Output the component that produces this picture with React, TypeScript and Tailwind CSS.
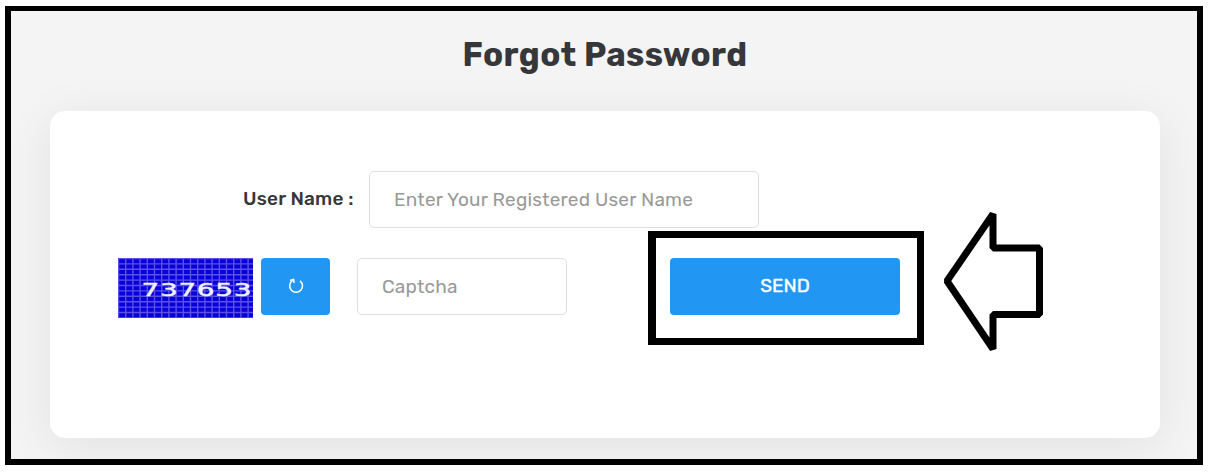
import React from "react";

const CaptchaImage: React.FC = () => {
  const columns = Array.from({ length: 19 }, (_, i) => 0.5 + i * 7.2);
  const rows = Array.from({ length: 12 }, (_, i) => 0.5 + i * 5.4);

  return (
    <svg
      className="mr-2 h-[60px] w-[135px]"
      viewBox="0 0 135 60"
      role="img"
      aria-label="Captcha"
    >
      <rect width="135" height="60" fill="#0800d8" />
      <g stroke="#5a50e8" strokeWidth="1.4">
        {columns.map((x) => (
          <path key={`c${x}`} d={`M${x} 0V60`} />
        ))}
        {rows.map((y) => (
          <path key={`r${y}`} d={`M0 ${y}H135`} />
        ))}
      </g>
      <text
        transform="translate(23.5 38) scale(1.55 1)"
        textLength="71"
        lengthAdjust="spacing"
        fill="#f0f0ff"
        stroke="#f0f0ff"
        strokeWidth="0.5"
        fontSize="18"
        fontFamily="DejaVu Sans, sans-serif"
      >
        737653
      </text>
    </svg>
  );
};

const RefreshIcon: React.FC = () => (
  <svg
    className="mb-0.5 h-5 w-5"
    viewBox="0 0 20 20"
    fill="none"
    stroke="currentColor"
    strokeWidth="1.5"
  >
    <path d="M14 4.8A6.4 6.4 0 1 1 6.8 4.4" />
    <path d="M4 4.4L7.6 3.4L8.1 7" />
  </svg>
);

const Arrow: React.FC = () => (
  <svg
    className="absolute top-[200px] left-[930px] h-[160px] w-[120px]"
    viewBox="930 200 120 160"
    fill="none"
    stroke="black"
    strokeWidth="7"
    strokeLinejoin="bevel"
  >
    <path d="M993 214V248H1039.5V314.5H993V349L947 281Z" />
  </svg>
);

export default function App() {
  return (
    <div className="relative h-[472px] w-[1215px] overflow-hidden bg-white pt-1.5 pl-[5px] font-['Rubik','Roboto',sans-serif] text-[#35373a]">
      <main className="h-[459px] w-[1198px] overflow-hidden border-[6px] border-t-[5px] border-black bg-[#f4f4f4]">
        <h1 className="flex h-[100px] items-center justify-center pb-3 pl-0.5 text-[33px] font-bold tracking-[0.4px]">
          Forgot Password
        </h1>
        <form
          className="ml-[39px] h-[327px] w-[1110px] rounded-[15px] bg-white pt-[60px] shadow-[0_8px_50px_rgba(0,0,0,0.08)]"
          onSubmit={(e) => e.preventDefault()}
        >
          <div className="flex items-center pl-[193px]">
            <label
              htmlFor="username"
              className="w-[126px] text-[19px] font-medium tracking-[0.2px] whitespace-nowrap"
            >
              User Name :
            </label>
            <input
              id="username"
              className="h-[57px] w-[390px] rounded-[5px] border border-[#dedede] px-6 text-[19px] tracking-[0.2px] placeholder:text-[#999]"
              placeholder="Enter Your Registered User Name"
            />
          </div>
          <div className="mt-[30px] flex items-start pl-[68px]">
            <CaptchaImage />
            <button
              type="button"
              aria-label="Refresh"
              className="flex h-[57px] w-[69px] items-center justify-center rounded-[4px] bg-[#2196f3] text-white"
            >
              <RefreshIcon />
            </button>
            <input
              className="ml-[27px] h-[57px] w-[210px] rounded-[5px] border border-[#dedede] px-6 text-[19px] tracking-[0.2px] placeholder:text-[#999]"
              placeholder="Captcha"
            />
            <button className="ml-[103px] h-[57px] w-[230px] rounded-[4px] bg-[#2196f3] text-[19px] text-white [-webkit-text-stroke:0.4px_white]">
              SEND
            </button>
          </div>
        </form>
      </main>
      <div className="absolute top-[231px] left-[648px] h-[114px] w-[276px] border-[7px] border-l-8 border-black" />
      <Arrow />
    </div>
  );
}
